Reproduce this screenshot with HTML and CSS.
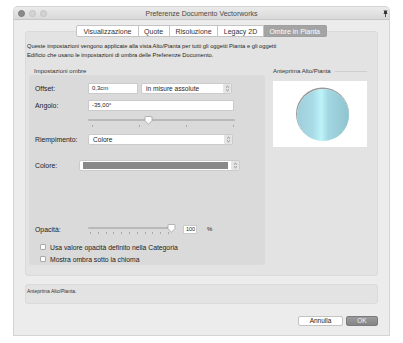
FILE: index.html
```html
<!DOCTYPE html>
<html><head><meta charset="utf-8"><link rel="stylesheet" href="styles.css"></head>
<body>
<div class="window">
  <div class="titlebar">
    <div class="lights"><span class="light dark"></span><span class="light"></span><span class="light"></span></div>
    <div class="title">Preferenze Documento Vectorworks</div>
    <div class="pinwrap"><svg class="pin" width="5" height="7" viewBox="0 0 5 7"><path d="M0.5 0.5h4l-0.6 1v1.6l0.8 0.9h-4.4l0.8-0.9v-1.6z" fill="#333"/><rect x="2.1" y="4" width="0.8" height="3" fill="#333"/></svg></div>
  </div>
  <div class="content">
    <div class="tabs">
      <span class="tab">Visualizzazione</span><span class="tab">Quote</span><span class="tab">Risoluzione</span><span class="tab">Legacy 2D</span><span class="tab sel">Ombre in Pianta</span>
    </div>
    <div class="pane">
      <p class="desc">Queste impostazioni vengono applicate alla vista Alto/Pianta per tutti gli oggetti Pianta e gli oggetti<br>Edificio che usano le impostazioni di ombra delle Preferenze Documento.</p>
      <div class="cols">
        <div class="left">
          <div class="gtitle">Impostazioni ombre</div>
          <div class="group">
            <div class="row r-offset">
              <span class="label">Offset:</span>
              <span class="field w50">0,3cm</span>
              <span class="popup w91"><span class="ptext">in misure assolute</span><span class="stepper"><svg width="5" height="7" viewBox="0 0 5 7"><path d="M1 2.6L2.5 1.2L4 2.6M1 4.4L2.5 5.8L4 4.4" fill="none" stroke="#777" stroke-width="0.8"/></svg></span></span>
            </div>
            <div class="row r-angolo">
              <span class="label">Angolo:</span>
              <span class="field w146">-35,00°</span>
            </div>
            <div class="slider s-angolo">
              <div class="track"></div>
              <div class="ticks t4"><i></i><i></i><i></i><i></i></div>
              <svg class="thumb th-angolo" width="9" height="9" viewBox="0 0 9 9"><path d="M1 1.5Q1 0.5 2 0.5H7Q8 0.5 8 1.5V4.5L4.5 8.3L1 4.5Z" fill="#fff" stroke="#9a9a9a" stroke-width="0.7"/></svg>
            </div>
            <div class="row r-riemp">
              <span class="label">Riempimento:</span>
              <span class="popup w145"><span class="ptext">Colore</span><span class="stepper"><svg width="5" height="7" viewBox="0 0 5 7"><path d="M1 2.6L2.5 1.2L4 2.6M1 4.4L2.5 5.8L4 4.4" fill="none" stroke="#777" stroke-width="0.8"/></svg></span></span>
            </div>
            <div class="row r-colore">
              <span class="label lab44">Colore:</span>
              <span class="popup w161"><span class="swatch"></span><span class="stepper"><svg width="5" height="7" viewBox="0 0 5 7"><path d="M1 2.6L2.5 1.2L4 2.6M1 4.4L2.5 5.8L4 4.4" fill="none" stroke="#777" stroke-width="0.8"/></svg></span></span>
            </div>
            <div class="row r-opac">
              <span class="label">Opacità:</span>
              <div class="slider s-opac">
                <div class="track"></div>
                <div class="ticks t11"><i></i><i></i><i></i><i></i><i></i><i></i><i></i><i></i><i></i><i></i><i></i></div>
                <svg class="thumb th-opac" width="9" height="9" viewBox="0 0 9 9"><path d="M1 1.5Q1 0.5 2 0.5H7Q8 0.5 8 1.5V4.5L4.5 8.3L1 4.5Z" fill="#fff" stroke="#9a9a9a" stroke-width="0.7"/></svg>
              </div>
              <span class="field small">100</span>
              <span class="pct">%</span>
            </div>
            <div class="checks">
              <label class="check"><span class="box"></span>Usa valore opacità definito nella Categoria</label>
              <label class="check"><span class="box"></span>Mostra ombra sotto la chioma</label>
            </div>
          </div>
        </div>
        <div class="right">
          <div class="gtitle rtitle">Anteprima Alto/Pianta</div>
          <div class="preview"><div class="circle"></div></div>
        </div>
      </div>
    </div>
    <div class="info">Anteprima Alto/Pianta.</div>
    <div class="buttons">
      <span class="btn">Annulla</span>
      <span class="btn ok">OK</span>
    </div>
  </div>
</div>
</body></html>
```
FILE: styles.css
```css
* { box-sizing: border-box; margin: 0; padding: 0; }
html, body { background: #fff; }
body {
  width: 403px; height: 343px; overflow: hidden;
  font-family: "Liberation Sans", Arial, sans-serif;
  color: #262626;
}
.window {
  margin: 7px 0 0 14px;
  width: 375px; height: 328px;
  background: #ececec;
  box-shadow: 0 0 0 1px #d4d4d4;
  border-radius: 4px 4px 0 0;
  display: flex; flex-direction: column;
}
.titlebar {
  height: 13px;
  background: linear-gradient(#ebebeb, #d9d9d9);
  border-bottom: 1px solid #c6c6c6;
  border-radius: 4px 4px 0 0;
  display: grid;
  grid-template-columns: 1fr auto 1fr;
  align-items: center;
}
.lights { display: flex; gap: 4px; padding-left: 4px; }
.light { width: 7px; height: 7px; border-radius: 50%; background: #d3d3d3; border: 0.5px solid #c2c2c2; }
.light.dark { background: #8a8a8a; border-color: #7a7a7a; }
.title { font-size: 7px; color: #4a4a4a; }
.pinwrap { display: flex; justify-content: flex-end; padding-right: 1px; }
.pin { display: block; }

.content { padding: 5px 11px 0 11px; display: flex; flex-direction: column; }
.tabs {
  display: flex; justify-content: center;
  height: 12px; margin-bottom: -6px;
  position: relative; z-index: 1;
}
.tab {
  height: 12px; line-height: 11px;
  padding: 0 5.6px;
  font-size: 7px; color: #333;
  background: #fff;
  border: 1px solid #c4c4c4; border-left: none;
}
.tab:first-child { border-left: 1px solid #c4c4c4; border-radius: 2px 0 0 2px; padding: 0 6px; }
.tab.sel { background: #a4a4a4; color: #fff; border-color: #a0a0a0; border-radius: 0 2px 2px 0; }

.pane {
  height: 245px;
  background: #e3e3e3;
  border: 1px solid #dadada;
  border-radius: 3px;
  padding-top: 10px;
}
.desc { font-size: 5.75px; line-height: 9px; padding-left: 1px; color: #1e1e1e; }
.cols { display: flex; margin-top: 7px; }
.left { margin-left: 3px; width: 236px; }
.gtitle { font-size: 6px; height: 8px; line-height: 8px; padding-left: 5px; color: #333; }
.group {
  height: 190px;
  background: #dadada;
  border-radius: 3px;
  padding-left: 6px;
  display: flex; flex-direction: column;
}
.right { margin-left: 8px; width: 94px; }
.rtitle { padding-left: 0; display: flex; align-items: center; gap: 4px; }
.rtitle::after { content: ""; flex: 1; height: 1px; background: #cfcfcf; }
.preview {
  margin-top: 6px; height: 66px; background: #fff;
  display: flex; align-items: center; justify-content: center;
  padding-left: 6px; padding-top: 2px;
}
.circle {
  width: 52px; height: 52px; border-radius: 50%;
  background: linear-gradient(90deg, #9fcedb 0%, #a8dbe6 30%, #bdf3fa 47%, #a3d7e1 60%, #8ec4ce 100%);
  box-shadow: -0.5px -1px 0 0.5px #9a9a9a;
}

.row { display: flex; align-items: center; height: 11px; }
.label { width: 53px; font-size: 6.9px; color: #222; flex: none; }
.lab44 { width: 44px; }
.r-offset { margin-top: 8px; }
.r-angolo { margin-top: 6px; }
.r-riemp { margin-top: 6px; }
.r-colore { margin-top: 15px; }
.r-opac { margin-top: 52px; height: 12px; }

.field {
  height: 11px; background: #fff;
  border: 1px solid #cbcbcb;
  font-size: 6px; line-height: 9px; padding-left: 3px;
  flex: none;
}
.w50 { width: 50px; }
.w146 { width: 146px; }
.field.small { width: 14px; height: 9px; line-height: 7px; padding-left: 2px; margin-left: 11px; font-size: 5.5px; }
.pct { font-size: 6px; margin-left: 10px; }
.popup {
  height: 11px; background: #fff;
  border: 1px solid #cbcbcb; border-radius: 2px;
  display: flex; align-items: center;
  font-size: 6.6px; flex: none;
}
.w91 { width: 91px; margin-left: 3px; }
.w145 { width: 145px; }
.w161 { width: 161px; }
.ptext { flex: 1; padding-left: 4px; }
.stepper {
  width: 8px; height: 9px; background: #e4e4e4; border-radius: 1px;
  display: flex; align-items: center; justify-content: center; margin-right: 0;
}
.stepper svg { display: block; }
.swatch { flex: 1; height: 7px; background: #888; margin: 0 3px 0 3px; }

.slider { position: relative; flex: none; }
.s-angolo { width: 147px; height: 14px; margin-top: 3px; margin-left: 53px; }
.s-opac { width: 84px; height: 12px; }
.track { position: absolute; left: 0; right: 0; top: 5px; height: 2px; background: #b9b9b9; border-radius: 1px; }
.s-opac .track { top: 4px; }
.ticks { position: absolute; left: 4px; right: 1px; top: 11px; height: 2px; display: flex; justify-content: space-between; }
.s-opac .ticks { top: 9px; left: 2px; right: 3px; }
.ticks i { width: 1px; height: 2px; background: #a8a8a8; }
.thumb { position: absolute; top: 2px; }
.th-angolo { left: 56px; }
.th-opac { left: 79px; top: 1px; }

.checks { margin-top: 6px; padding-left: 5px; }
.check { display: flex; align-items: center; height: 12px; font-size: 6.8px; color: #222; }
.box { width: 6px; height: 6px; background: #fff; border: 0.5px solid #a9a9a9; border-radius: 1px; margin-right: 4px; }

.info {
  margin-top: 8px; height: 20px;
  background: #e3e3e3; border: 1px solid #dadada; border-radius: 3px;
  font-size: 5px; padding: 3px 1px; color: #333;
}
.buttons { display: flex; justify-content: flex-end; gap: 3px; margin-top: 12px; }
.btn {
  height: 10px; line-height: 8px; font-size: 6.5px; text-align: center;
  background: #fff; border: 1px solid #c3c3c3; border-radius: 2px; color: #222;
}
.btn:first-child { width: 45px; }
.btn.ok { width: 32px; background: linear-gradient(#9b9b9b, #858585); border-color: #7c7c7c; color: #f2f2f2; }
```
